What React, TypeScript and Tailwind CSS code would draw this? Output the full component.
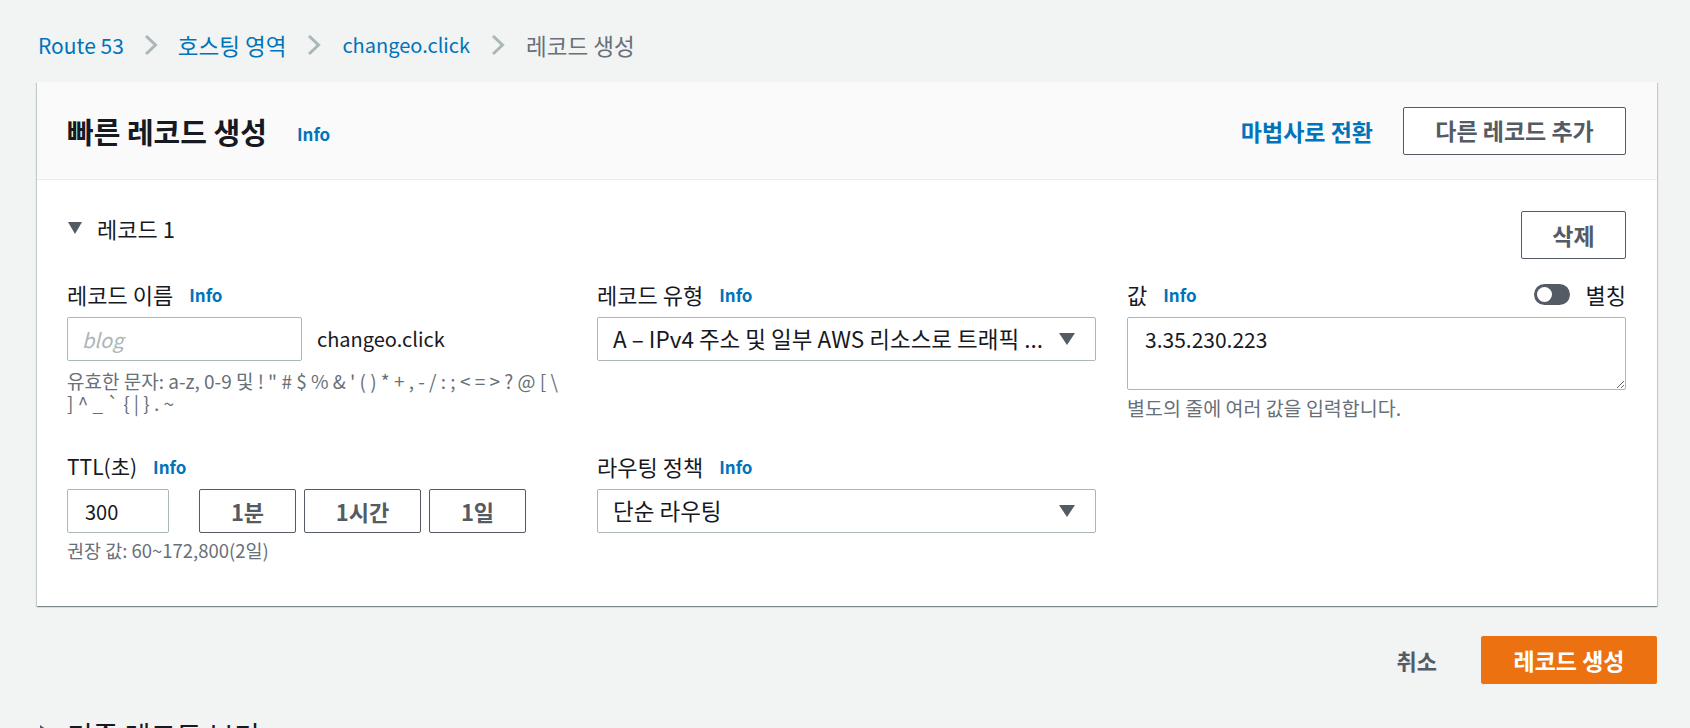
import { useState } from "react";

const FONT = "font-['Noto_Sans_CJK_KR',sans-serif]";

function Chevron() {
  return (
    <svg width="14" height="22" viewBox="0 0 14 22" className="shrink-0">
      <polyline points="2,2 11.5,11 2,20" fill="none" stroke="#aab7b8" strokeWidth="3" />
    </svg>
  );
}

function Caret() {
  return (
    <svg width="16" height="12" viewBox="0 0 16 12" className="shrink-0">
      <polygon points="0,0 16,0 8,12" fill="#545b64" />
    </svg>
  );
}

function Label({ text, size = "text-[22px]" }: { text: string; size?: string }) {
  return (
    <div className="flex items-center gap-[16px] h-[26px]">
      <span className={`${size} leading-[26px] text-[#16191f]`}>{text}</span>
      <a className="text-[17px] leading-[26px] font-bold text-[#0073bb] mt-[2px]">Info</a>
    </div>
  );
}

const outlineBtn =
  "h-[44px] border border-[#545b64] rounded-[2px] bg-white text-[22px] leading-none font-bold text-[#545b64]";

export default function App() {
  const [alias, setAlias] = useState(false);

  return (
    <div className={`${FONT} min-h-[728px] bg-[#f2f3f3] pl-[37px] pr-[33px] pt-[31px] overflow-hidden`}>
      {/* Breadcrumb */}
      <nav className="flex items-center h-[28px] pl-[1px] leading-[28px]">
        <a className="text-[21px] text-[#0073bb]">Route 53</a>
        <span className="mx-[20px]"><Chevron /></span>
        <a className="text-[22.5px] text-[#0073bb]">호스팅 영역</a>
        <span className="mx-[21px]"><Chevron /></span>
        <a className="text-[20px] text-[#0073bb]">changeo.click</a>
        <span className="mx-[21px]"><Chevron /></span>
        <span className="text-[22.5px] text-[#687078]">레코드 생성</span>
      </nav>

      {/* Card */}
      <div className="mt-[23px] bg-white shadow-[0_1px_1px_0_rgba(0,28,36,0.3),1px_1px_1px_0_rgba(0,28,36,0.15),-1px_1px_1px_0_rgba(0,28,36,0.15)]">
        <div className="h-[98px] bg-[#fafafa] border-b border-[#eaeded] flex items-center justify-between pl-[30px] pr-[31px]">
          <div className="flex items-center gap-[30px]">
            <h2 className="text-[29px] leading-[36px] font-bold text-[#16191f]">빠른 레코드 생성</h2>
            <a className="text-[17px] font-bold text-[#0073bb] mt-[6px]">Info</a>
          </div>
          <div className="flex items-center gap-[30px]">
            <a className="text-[23px] leading-[30px] font-bold text-[#0073bb]">마법사로 전환</a>
            <button className="w-[223px] h-[48px] border border-[#545b64] rounded-[2px] bg-white text-[23px] leading-none font-bold text-[#545b64]">
              다른 레코드 추가
            </button>
          </div>
        </div>

        <div className="pl-[30px] pr-[31px] pt-[31px] pb-[44px]">
          <div className="flex items-start justify-between">
            <div className="flex items-center gap-[15px] h-[34px]">
              <svg width="14" height="12" viewBox="0 0 14 12" className="ml-[1px]">
                <polygon points="0,0 14,0 7,12" fill="#545b64" />
              </svg>
              <span className="text-[22px] leading-[28px] text-[#16191f]">레코드 1</span>
            </div>
            <button className="w-[105px] h-[48px] border border-[#545b64] rounded-[2px] bg-white text-[23px] leading-none font-bold text-[#545b64]">
              삭제
            </button>
          </div>

          <div className="grid grid-cols-3 gap-x-[31px] mt-[22px]">
            {/* Record name */}
            <div>
              <Label text="레코드 이름" />
              <div className="flex items-center gap-[15px] mt-[10px]">
                <input
                  className="w-[235px] h-[44px] border border-[#aab7b8] rounded-[2px] px-[14px] text-[20px] placeholder:italic placeholder:text-[#aab7b8] outline-none"
                  placeholder="blog"
                />
                <span className="text-[20px] text-[#16191f]">changeo.click</span>
              </div>
              <div className="text-[19px] leading-[22px] text-[#687078] mt-[9px] whitespace-nowrap">
                <div>유효한 문자: a-z, 0-9 및 ! " # $ % &amp; ' ( ) * + , - / : ; &lt; = &gt; ? @ [ \</div>
                <div>] ^ _ ` {"{"} | {"}"} . ~</div>
              </div>
            </div>

            {/* Record type */}
            <div>
              <Label text="레코드 유형" />
              <div className="mt-[10px] h-[44px] border border-[#aab7b8] rounded-[2px] flex items-center justify-between pl-[15px] pr-[20px]">
                <span className="text-[22.5px] text-[#16191f] whitespace-nowrap">A – IPv4 주소 및 일부 AWS 리소스로 트래픽 ...</span>
                <Caret />
              </div>
            </div>

            {/* Value */}
            <div>
              <div className="flex items-center justify-between">
                <Label text="값" />
                <div className="flex items-center gap-[16px]">
                  <button
                    onClick={() => setAlias(!alias)}
                    className="w-[36px] h-[21px] rounded-full bg-[#545b64] px-[3px] flex items-center"
                  >
                    <span className="w-[15px] h-[15px] rounded-full bg-white" />
                  </button>
                  <span className="text-[22px] leading-[26px] text-[#16191f]">별칭</span>
                </div>
              </div>
              <textarea
                className="mt-[10px] block w-full h-[73px] border border-[#aab7b8] rounded-[2px] px-[17px] py-[6px] text-[21px] text-[#16191f] outline-none"
                defaultValue="3.35.230.223"
              />
              <p className="text-[19.5px] leading-[24px] text-[#687078] mt-[6px]">별도의 줄에 여러 값을 입력합니다.</p>
            </div>

            {/* TTL */}
            <div className="mt-[33px]">
              <Label text="TTL(초)" size="text-[21px]" />
              <div className="flex items-center mt-[10px]">
                <input
                  className="w-[102px] h-[44px] border border-[#aab7b8] rounded-[2px] px-[17px] text-[20px] text-[#16191f] outline-none"
                  defaultValue="300"
                />
                <div className="flex gap-[8px] ml-[30px]">
                  <button className={`w-[97px] ${outlineBtn}`}>1분</button>
                  <button className={`w-[117px] ${outlineBtn}`}>1시간</button>
                  <button className={`w-[97px] ${outlineBtn}`}>1일</button>
                </div>
              </div>
              <p className="text-[18.5px] leading-[24px] text-[#687078] mt-[5px]">권장 값: 60~172,800(2일)</p>
            </div>

            {/* Routing */}
            <div className="mt-[33px]">
              <Label text="라우팅 정책" />
              <div className="mt-[10px] h-[44px] border border-[#aab7b8] rounded-[2px] flex items-center justify-between pl-[15px] pr-[20px]">
                <span className="text-[22.5px] text-[#16191f]">단순 라우팅</span>
                <Caret />
              </div>
            </div>
          </div>
        </div>
      </div>

      {/* Footer actions */}
      <div className="flex items-center justify-end gap-[44px] mt-[30px]">
        <button className="text-[22px] font-bold text-[#545b64]">취소</button>
        <button className="w-[176px] h-[48px] rounded-[2px] bg-[#ec7211] text-[23px] leading-none font-bold text-white">레코드 생성</button>
      </div>

      {/* Existing records */}
      <div className="flex items-start gap-[17px] mt-[33px] pl-[3px]">
        <svg width="10" height="14" viewBox="0 0 10 14" className="mt-[8px]">
          <polygon points="0,0 10,7 0,14" fill="#545b64" />
        </svg>
        <span className="text-[28px] leading-[36px] text-[#16191f]">기존 레코드 보기</span>
      </div>
    </div>
  );
}
